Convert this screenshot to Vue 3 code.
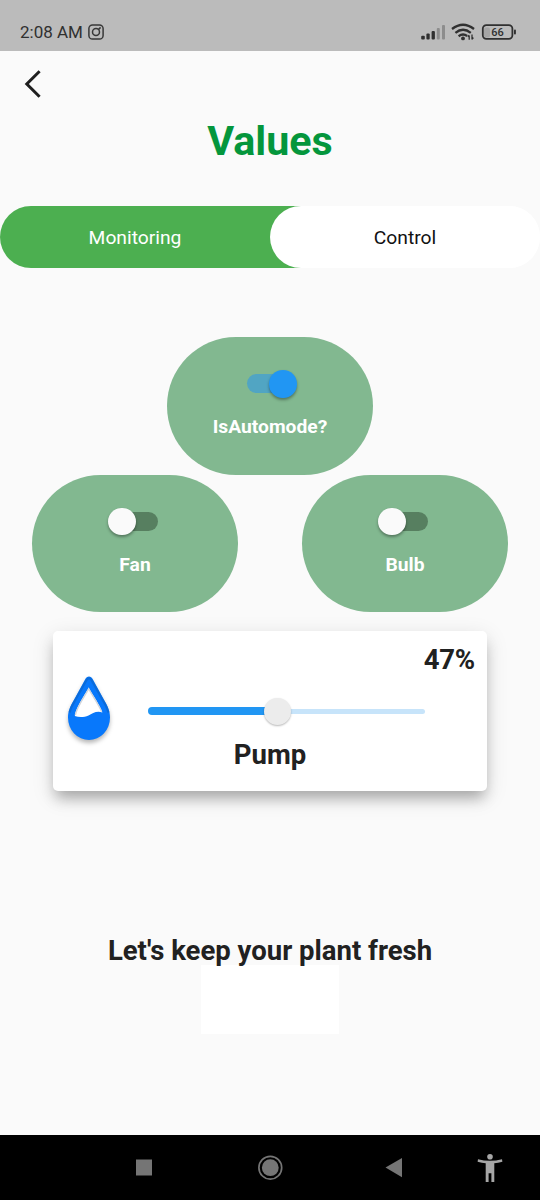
<script setup>
import { ref } from 'vue'

const automode = ref(true)
const devices = ref([
  { name: 'Fan', on: false },
  { name: 'Bulb', on: false },
])
const pump = ref(47)
</script>

<template>
  <div class="screen">
    <header class="status">
      <span class="time">2:08 AM</span>
      <svg class="insta" width="16" height="16" viewBox="0 0 16 16" fill="none" stroke="#383838" stroke-width="1.5">
        <rect x="0.9" y="0.9" width="14.2" height="14.2" rx="3.6" />
        <circle cx="8" cy="8" r="3.5" />
        <path d="M10.6 5.4L12.6 3.4" />
      </svg>
      <svg class="indicators" width="98" height="20" viewBox="0 0 98 20">
        <g fill="#303030">
          <rect x="1.2" y="12.8" width="3.6" height="3.6" rx="1" />
          <rect x="6.4" y="10.6" width="3.3" height="5.8" rx="1" />
          <rect x="11.6" y="8" width="3.3" height="8.4" rx="1" />
        </g>
        <g fill="#8d8d8d">
          <rect x="16.8" y="5" width="3" height="11.4" rx="1" />
          <rect x="22" y="2" width="3" height="14.4" rx="1" />
        </g>
        <g fill="none" stroke="#303030" stroke-width="2.3">
          <path d="M32 6 Q43 -2.6 54 6" />
          <path d="M35.4 9.8 Q43 3.8 50.8 9.8" />
          <path d="M38.6 13.2 Q43 10 47.2 13" />
        </g>
        <circle cx="43" cy="15.4" r="1.9" fill="#303030" />
        <path d="M49.2 16.8V12.4M47.8 13.8L49.2 12.2M52 11.6V16.6M53.4 14.6L52 16.4" fill="none" stroke="#303030" stroke-width="1.3" />
        <rect x="64" y="4.4" width="6" height="10.2" rx="2" fill="#a5a5a5" />
        <rect x="62.8" y="2.1" width="29.6" height="13.8" rx="3.6" fill="none" stroke="#303030" stroke-width="1.8" />
        <rect x="94" y="6.5" width="1.9" height="5" rx="0.9" fill="#303030" />
        <text x="77.6" y="13.2" text-anchor="middle" class="charge">66</text>
      </svg>
    </header>

    <nav class="appbar">
      <svg width="20" height="30" viewBox="0 0 20 30" fill="none" stroke="#1f1f1f" stroke-width="3">
        <path d="M16.6 2.2 L3.8 15 L16.6 27.8" />
      </svg>
    </nav>

    <h1>Values</h1>

    <div class="tabs">
      <div class="tab">Monitoring</div>
      <div class="tab active">Control</div>
    </div>

    <main>
      <section class="tile auto">
        <div class="switch" :class="{ on: automode }" @click="automode = !automode"><i></i></div>
        <b>IsAutomode?</b>
      </section>
      <div class="pair">
        <section v-for="d in devices" :key="d.name" class="tile">
          <div class="switch" :class="{ on: d.on }" @click="d.on = !d.on"><i></i></div>
          <b>{{ d.name }}</b>
        </section>
      </div>

      <section class="card">
        <div class="percent">{{ pump }}%</div>
        <div class="control">
          <svg class="drop" width="56" height="76" viewBox="0 0 56 76">
            <path d="M28 5.6C29.6 5.6 30.8 6.6 31.8 8.3L43.4 29.5C46.6 35 49 40 49 46.6A21 22.4 0 0 1 7 46.6C7 40 9.4 35 12.6 29.5L24.2 8.3C25.2 6.6 26.4 5.6 28 5.6Z" fill="#0878fb" />
            <path d="M8.6 41.4C9.6 37 11.6 33.6 14 29.5L25.4 9.2C26.8 6.7 29.2 6.7 30.6 9.2L42 29.5C44.4 33.6 46.4 37 47.4 41.4" fill="none" stroke="#0b62c4" stroke-width="2.2" class="rim" />
            <path d="M27.7 16.8C31 23 38.8 34 41.4 41.5C35.5 39.4 31.5 42.6 27.5 44.4C23 46.4 18 46.4 13.8 45C14.8 36.5 24.4 23 27.7 16.8Z" fill="#fff" />
            <path d="M14.4 44.2C15.4 36.5 24.8 23.5 27.7 17.8C30.6 23.5 38 34 40.6 40.8" fill="none" stroke="#d2d5da" stroke-width="1.4" />
          </svg>
          <div class="slider">
            <div class="fill" :style="{ width: pump + '%' }"></div>
            <div class="rest"></div>
            <div class="thumb" :style="{ left: pump + '%' }"></div>
          </div>
        </div>
        <div class="name">Pump</div>
      </section>

      <p class="slogan">Let's keep your plant fresh</p>
      <div class="blank"></div>
    </main>

    <footer>
      <svg width="540" height="65" viewBox="0 0 540 65">
        <rect x="136" y="24.5" width="16" height="16" fill="#757575" />
        <circle cx="270.3" cy="32.7" r="8.4" fill="#757575" />
        <circle cx="270.3" cy="32.7" r="11.4" fill="none" stroke="#757575" stroke-width="1.7" />
        <path d="M385.5 32.5L402 23V42.3Z" fill="#757575" />
        <g fill="#a6a6a6">
          <circle cx="490" cy="21.7" r="2.8" />
          <path d="M478 24.2Q490 27.5 502 24.2L502.4 26.8Q498 28 494.3 28.3V47H491.4V38.3H488.6V47H485.7V28.3Q482 28 477.6 26.8Z" />
        </g>
      </svg>
    </footer>
  </div>
</template>

<style>
body {
  margin: 0;
  background: #fafafa;
}
</style>

<style scoped>
.screen {
  width: 540px;
  height: 1200px;
  display: flex;
  flex-direction: column;
  overflow: hidden;
  background: #fafafa;
  color: #212121;
  font-family: Roboto, "Liberation Sans", sans-serif;
}
.status {
  flex: none;
  display: flex;
  align-items: center;
  height: 51px;
  box-sizing: border-box;
  padding: 14px 22px 0 20px;
  background: #bbb;
}
.time {
  margin-top: -2px;
  font-size: 17px;
  line-height: 20px;
  color: #303030;
}
.insta {
  margin-left: 5px;
  margin-top: -2px;
}
.indicators {
  margin-left: auto;
}
.charge {
  font-size: 11px;
  font-weight: 500;
  fill: #303030;
}
.appbar {
  flex: none;
  height: 66px;
  box-sizing: border-box;
  padding: 18px 0 0 23px;
}
h1 {
  margin: 0;
  font-size: 41.25px;
  line-height: 48px;
  font-weight: 700;
  text-align: center;
  color: #04963c;
}
.tabs {
  flex: none;
  display: grid;
  grid-template-columns: 1fr 1fr;
  height: 61.5px;
  margin-top: 41.4px;
  border-radius: 31px;
  background: linear-gradient(90deg, #4caf50 60%, #fff 60%);
}
.tab {
  font-size: 19.25px;
  line-height: 63px;
  height: 61.5px;
  text-align: center;
  color: #fff;
}
.tab.active {
  border-radius: 31px;
  background: #fff;
  color: #111;
}
main {
  flex: 1;
  display: flex;
  flex-direction: column;
  align-items: center;
  padding-top: 69.2px;
}
.tile {
  display: flex;
  flex-direction: column;
  align-items: center;
  width: 206.2px;
  height: 137.5px;
  box-sizing: border-box;
  padding-top: 33px;
  border-radius: 69px;
  background: #82b890;
  color: #fff;
}
.tile b {
  margin-top: 17.9px;
  font-size: 19.25px;
  line-height: 23px;
  font-weight: 700;
}
.pair {
  display: grid;
  grid-template-columns: 1fr 1fr;
  justify-items: center;
  width: 540px;
}
.switch {
  position: relative;
  width: 50px;
  height: 27.5px;
}
.switch::before {
  content: "";
  position: absolute;
  left: 2.3px;
  top: 4.1px;
  width: 45.4px;
  height: 19.3px;
  border-radius: 10px;
  background: #577f60;
}
.switch i {
  position: absolute;
  left: -2px;
  top: 0;
  width: 27.5px;
  height: 27.5px;
  border-radius: 50%;
  background: #fafafa;
  box-shadow: 0 2px 3px rgba(0, 0, 0, 0.35);
}
.switch.on::before {
  background: #51a5c3;
}
.switch.on i {
  left: 24.3px;
  background: #2196f3;
}
.card {
  width: 434px;
  height: 160px;
  margin-top: 18.8px;
  border-radius: 5px;
  background: #fff;
  box-shadow: 0 10px 14px -3px rgba(0, 0, 0, 0.26), 0 6px 22px rgba(0, 0, 0, 0.13);
}
.percent {
  padding: 13px 12px 0 0;
  font-size: 27.5px;
  line-height: 32px;
  font-weight: 700;
  text-align: right;
  letter-spacing: -0.2px;
}
.control {
  display: flex;
  align-items: center;
  height: 71px;
  padding-left: 8px;
}
.drop {
  margin-top: -5px;
  filter: drop-shadow(0 3px 2px rgba(0, 0, 0, 0.28));
}
.rim {
  opacity: 0.6;
}
.slider {
  position: relative;
  display: flex;
  align-items: center;
  width: 277.5px;
  height: 28px;
  margin: 0 0 0 30.5px;
}
.fill {
  height: 8.2px;
  border-radius: 4px 0 0 4px;
  background: #2196f3;
}
.rest {
  flex: 1;
  height: 5.5px;
  border-radius: 0 3px 3px 0;
  background: #c7e4fa;
}
.thumb {
  position: absolute;
  top: 0.5px;
  width: 27.5px;
  height: 27.5px;
  margin-left: -14px;
  border-radius: 50%;
  background: #ececec;
  box-shadow: 0 1px 2px rgba(0, 0, 0, 0.28);
}
.name {
  margin-top: -8px;
  font-size: 27.5px;
  line-height: 32px;
  font-weight: 700;
  text-align: center;
}
.slogan {
  position: relative;
  z-index: 1;
  margin: 144px 0 0;
  font-size: 27.5px;
  line-height: 32px;
  font-weight: 700;
}
.blank {
  width: 138px;
  height: 69px;
  margin-top: -2px;
  background: #fff;
}
footer {
  flex: none;
  height: 65px;
  background: #000;
}
</style>
